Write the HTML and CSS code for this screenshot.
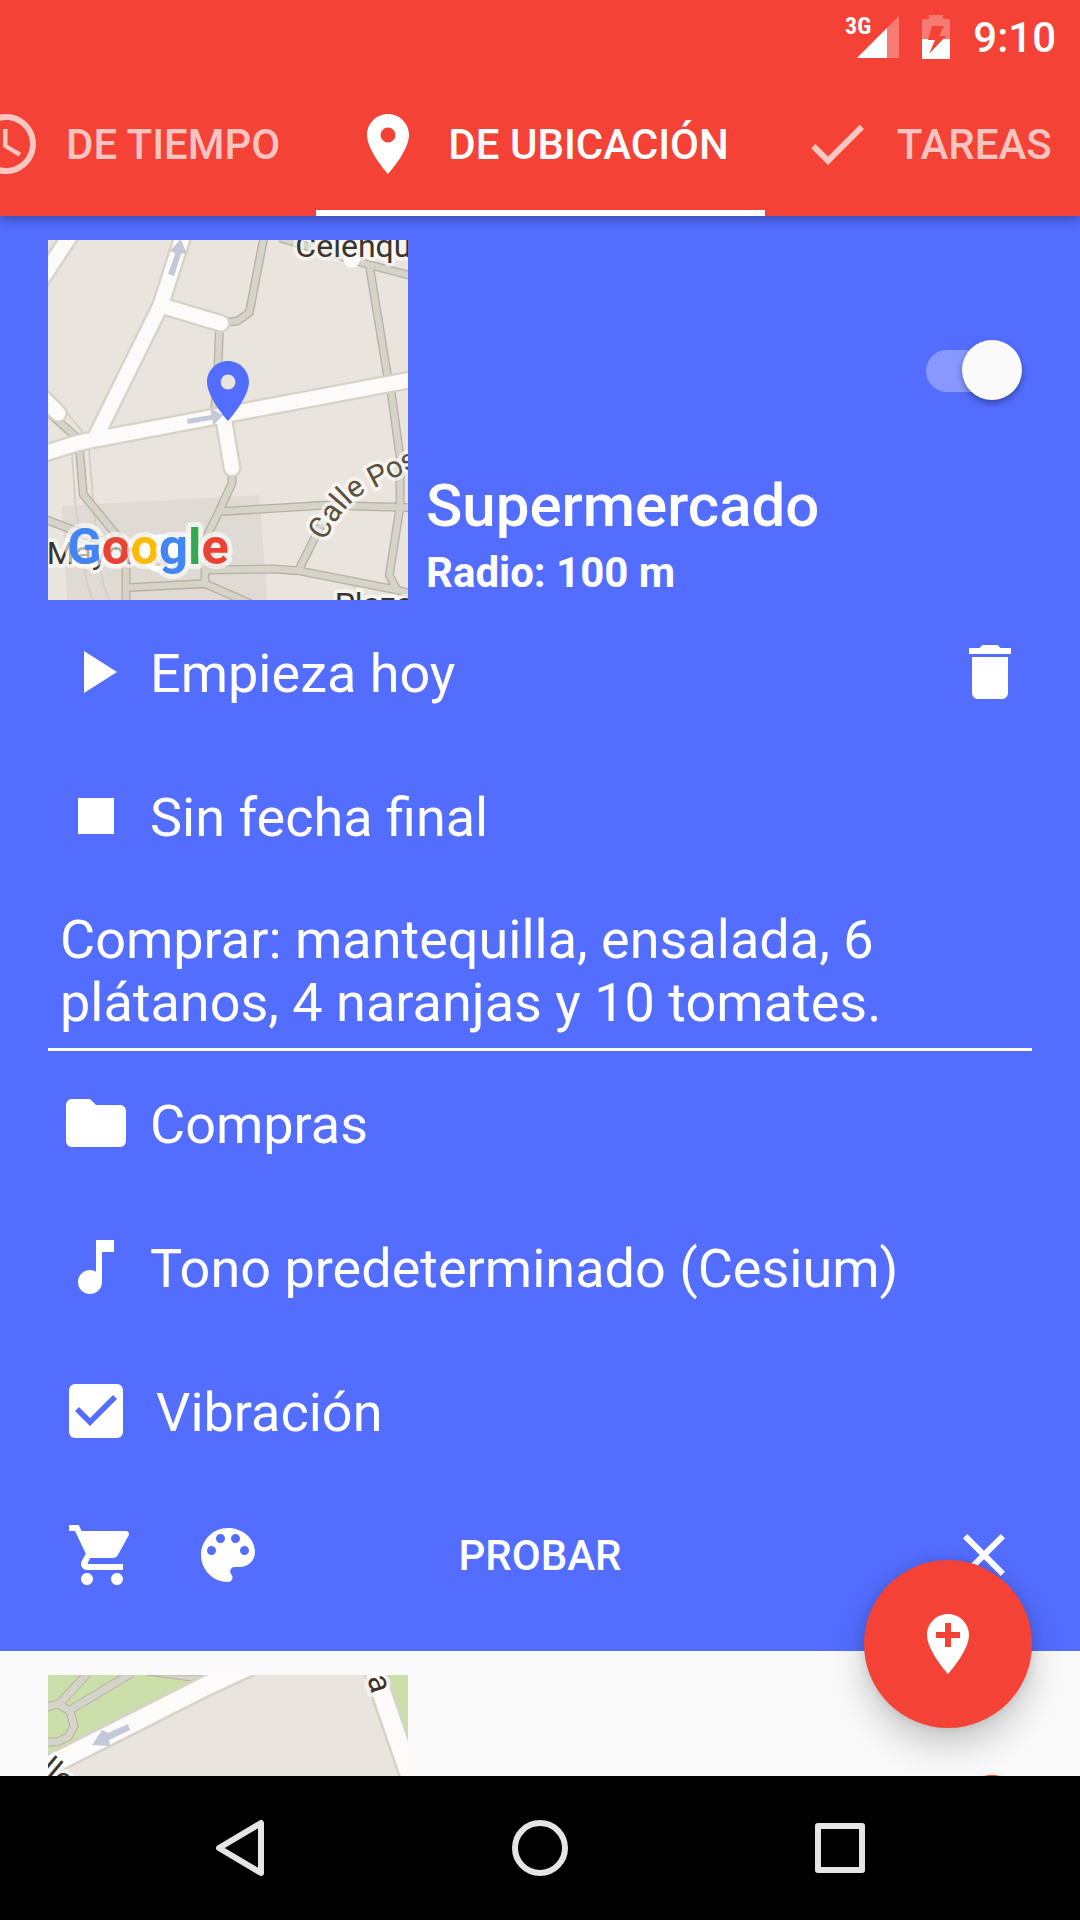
FILE: index.html
```html
<!DOCTYPE html>
<html lang="es">

<head>
    <meta charset="UTF-8">
    <meta name="viewport" content="width=device-width, initial-scale=1.0">
    <title>Recordatorios</title>
    <link rel="stylesheet" href="styles.css">
</head>

<body>
    <header class="app-bar">
        <div class="status-bar">
            <svg class="signal" viewBox="0 0 54 44">
                <text class="signal-text" x="0" y="19">3G</text>
                <path d="M54 1v42H12z" fill="#fff" fill-opacity=".3" />
                <path d="M42 13v30H12z" fill="#fff" />
            </svg>
            <svg class="battery" viewBox="0 0 28 44">
                <path d="M7 0h14v4h7v20H0V4h7z" fill="#fff" fill-opacity=".3" />
                <path d="M0 24h28v20H0z" fill="#fff" />
                <path d="M10 11h12l-5 10h7L7 39l6-14H6z" fill="#f44336" />
            </svg>
            <span class="clock">9:10</span>
        </div>
        <nav class="tabs">
            <a href="#tiempo" class="tab">
                <svg class="icon" viewBox="0 0 24 24"><path d="M11.99 2C6.47 2 2 6.48 2 12s4.47 10 9.99 10C17.52 22 22 17.52 22 12S17.52 2 11.99 2zM12 20c-4.42 0-8-3.58-8-8s3.58-8 8-8 8 3.58 8 8-3.58 8-8 8zm.5-13H11v6l5.25 3.15.75-1.23-4.5-2.67z" /></svg>
                De tiempo
            </a>
            <a href="#ubicacion" class="tab active">
                <svg class="icon" viewBox="0 0 24 24"><path d="M12 2C8.13 2 5 5.13 5 9c0 5.25 7 13 7 13s7-7.75 7-13c0-3.87-3.13-7-7-7zm0 9.500a2.500 2.500 0 0 1 0-5 2.500 2.500 0 0 1 0 5z" /></svg>
                De ubicación
            </a>
            <a href="#tareas" class="tab">
                <svg class="icon" viewBox="0 0 24 24"><path d="M9 16.170L4.830 12l-1.420 1.410L9 19 21 7l-1.410-1.410z" /></svg>
                Tareas
            </a>
        </nav>
    </header>

    <main class="content">
        <div class="list">
            <section class="card open" id="ubicacion">
                <div class="place">
                    <svg class="map" viewBox="24 30 1080 1080">
                        <rect x="24" y="30" width="1080" height="1080" fill="#e9e5de" />
                        <path d="M65 828L658 796l24 320H82z" fill="#dfdbd4" />
                        <!-- narrow lanes -->
                        <path class="lane-thin" d="M95 660l12 170 25 170q5 60 30 120M146 650l15 180 20 190q8 50 30 100M75 540l60 75M945 1065v50" />
                        <!-- footpaths -->
                        <g class="path-edge">
                            <path id="walks" d="M672 20L628 248l-36 25-34 4M538 300l-4 110-10 130M720 24L990 105l130 34M988 105l54 330 12 55 26 190v150l-32 206 27 52M576 735v24l-39 86-42 85v125M537 845l313-19 270 7M500 1020l200-3 75 5 305 60 40 12M775 1022l75-150M258 1120v-47l237-12 150 66M0 523l116 105 14 166 128 156v123M0 862l240 92" />
                        </g>
                        <use href="#walks" class="path-fill" />
                        <!-- streets -->
                        <g class="street-edge">
                            <path id="streets" d="M0 674l110-34 30-7 980-185M165 625L362 226 430 14M368 228l175 52M550 560l26 154M0 155L112-16M0 495l55 55" />
                        </g>
                        <use href="#streets" class="street-fill" />
                        <circle cx="935" cy="88" r="25" fill="#fcfbfa" />
                        <g class="arrow">
                            <path d="M384 132l22-62-16-7 32-36 19 46-17-3-22 68z" />
                            <path d="M441 567l73-12-3-21 38 22-29 30-3-17-74 13z" />
                        </g>
                        <circle cx="362" cy="970" r="57" fill="#fff" />
                        <path d="M338 934h50v76h-50zM345 958h36M362 934v26" fill="#cfc3bd" stroke="#fff" stroke-width="6" />
                        <g class="map-label">
                            <text x="766" y="80">Celenqu</text>
                            <text x="20" y="1003">Mayor</text>
                            <text x="884" y="1156">Plaza</text>
                            <path id="calle" d="M854 934Q898 852 934 818T1010 772L1170 690" fill="none" />
                            <text class="street-name"><textPath href="#calle">Calle Post</textPath></text>
                        </g>
                        <text class="google" x="82" y="1002"><tspan fill="#4285f4">G</tspan><tspan fill="#ea4335">o</tspan><tspan fill="#fbbc05">o</tspan><tspan fill="#4285f4">g</tspan><tspan fill="#34a853">l</tspan><tspan fill="#ea4335">e</tspan></text>
                        <path d="M12 2C8.13 2 5 5.13 5 9c0 5.25 7 13 7 13s7-7.75 7-13c0-3.87-3.13-7-7-7zm0 9.500a2.500 2.500 0 0 1 0-5 2.500 2.500 0 0 1 0 5z" fill="#536dfe" transform="translate(456 375) scale(9)" />
                    </svg>
                    <div class="place-info">
                        <input type="checkbox" class="switch" aria-label="Activar Supermercado" checked>
                        <div class="place-text">
                            <h2>Supermercado</h2>
                            <p>Radio: 100 m</p>
                        </div>
                    </div>
                </div>

                <div class="row">
                    <button class="row-btn">
                        <svg class="icon" viewBox="0 0 24 24"><path d="M8 5v14l11-7z" /></svg>
                        <span>Empieza hoy</span>
                    </button>
                    <button class="icon-btn" aria-label="Eliminar">
                        <svg class="icon" viewBox="0 0 24 24"><path d="M6 19c0 1.100.9 2 2 2h8c1.100 0 2-.9 2-2V7H6v12zM19 4h-3.500l-1-1h-5l-1 1H5v2h14V4z" /></svg>
                    </button>
                </div>
                <div class="row">
                    <button class="row-btn">
                        <svg class="icon" viewBox="0 0 24 24"><path d="M6 6h12v12H6z" /></svg>
                        <span>Sin fecha final</span>
                    </button>
                </div>

                <textarea class="note" rows="2" aria-label="Nota" spellcheck="false">Comprar: mantequilla, ensalada, 6 plátanos, 4 naranjas y 10 tomates.</textarea>

                <div class="row">
                    <button class="row-btn">
                        <svg class="icon" viewBox="0 0 24 24"><path d="M10 4H4c-1.100 0-1.990.9-1.990 2L2 18c0 1.100.9 2 2 2h16c1.100 0 2-.9 2-2V8c0-1.100-.9-2-2-2h-8l-2-2z" /></svg>
                        <span>Compras</span>
                    </button>
                </div>
                <div class="row">
                    <button class="row-btn">
                        <svg class="icon" viewBox="0 0 24 24"><path d="M12 3v10.550c-.59-.34-1.270-.55-2-.55-2.210 0-4 1.790-4 4s1.790 4 4 4 4-1.790 4-4V7h4V3h-6z" /></svg>
                        <span>Tono predeterminado (Cesium)</span>
                    </button>
                </div>
                <div class="row">
                    <label class="check-label">
                        <input type="checkbox" class="check" checked>
                        <span>Vibración</span>
                    </label>
                </div>

                <div class="actions">
                    <div class="actions-left">
                        <button class="icon-btn" aria-label="Icono">
                            <svg class="icon" viewBox="0 0 24 24"><path d="M7 18c-1.100 0-1.990.9-1.990 2S5.900 22 7 22s2-.9 2-2-.9-2-2-2zM1 2v2h2l3.600 7.590-1.350 2.450c-.16.28-.25.61-.25.96 0 1.100.9 2 2 2h12v-2H7.420c-.14 0-.25-.11-.25-.25l.03-.12.900-1.630h7.450c.75 0 1.410-.41 1.750-1.030l3.580-6.490c.08-.14.12-.31.12-.48 0-.55-.45-1-1-1H5.210l-.94-2H1zm16 16c-1.100 0-1.990.9-1.990 2s.89 2 1.990 2 2-.9 2-2-.9-2-2-2z" /></svg>
                        </button>
                        <button class="icon-btn" aria-label="Color">
                            <svg class="icon" viewBox="0 0 24 24"><path d="M12 3c-4.970 0-9 4.030-9 9s4.030 9 9 9c.83 0 1.500-.67 1.500-1.500 0-.39-.15-.74-.39-1.010-.23-.26-.38-.61-.38-.99 0-.83.67-1.500 1.500-1.500H16c2.760 0 5-2.240 5-5 0-4.420-4.030-8-9-8zm-5.500 9c-.83 0-1.500-.67-1.500-1.500S5.670 9 6.500 9 8 9.670 8 10.500 7.330 12 6.500 12zm3-4C8.670 8 8 7.330 8 6.500S8.670 5 9.500 5s1.500.67 1.500 1.500S10.330 8 9.500 8zm5 0c-.83 0-1.500-.67-1.500-1.500S13.670 5 14.500 5s1.500.67 1.500 1.500S15.330 8 14.500 8zm3 4c-.83 0-1.500-.67-1.500-1.500S16.670 9 17.500 9s1.500.67 1.500 1.500-.67 1.500-1.500 1.500z" /></svg>
                        </button>
                    </div>
                    <button class="text-btn">Probar</button>
                    <button class="icon-btn close-btn" aria-label="Cerrar">
                        <svg class="icon" viewBox="0 0 24 24"><path d="M19 6.410L17.590 5 12 10.590 6.410 5 5 6.410 10.590 12 5 17.590 6.410 19 12 13.410 17.590 19 19 17.590 13.410 12z" /></svg>
                    </button>
                </div>
            </section>

            <section class="card">
                <div class="place">
                    <svg class="map" viewBox="0 0 360 360">
                        <rect width="360" height="360" fill="#e9e5de" />
                        <path d="M0 0h184L0 92zM340 0h20v75z" fill="#cbdfaa" />
                        <path d="M99 0h60l-16 6z" fill="#d4d4c8" stroke="#b9b0a5" />
                        <path class="park-edge" d="M-5 33L10 29l12 7 4 15-6 11-11 5H-5M12 28L40-2M22 35L84-2" />
                        <path class="park-fill" d="M-5 33L10 29l12 7 4 15-6 11-11 5H-5M12 28L40-2M22 35L84-2" />
                        <path d="M212-14l-52 24L14 84l-40 21M326-6l8 25 100 290" fill="none" stroke="#d8d2c6" stroke-width="23" />
                        <path d="M212-14l-52 24L14 84l-40 21M326-6l8 25 100 290" fill="none" stroke="#fcfbfa" stroke-width="18" />
                        <path class="arrow" d="M80 49l-20 9-6-3-10 15 18 1-1-6 21-10z" />
                        <g class="map-label small">
                            <text transform="translate(319 3) rotate(73)">a</text>
                            <text transform="translate(-10 97) rotate(40)">lle</text>
                        </g>
                    </svg>
                    <div class="place-info">
                        <input type="checkbox" class="switch" aria-label="Activar recordatorio" checked>
                    </div>
                </div>
            </section>
        </div>

        <button class="fab" aria-label="Añadir ubicación">
            <svg class="icon" viewBox="0 0 24 24"><path d="M12 2C8.140 2 5 5.140 5 9c0 5.250 7 13 7 13s7-7.750 7-13c0-3.860-3.140-7-7-7zm4 8h-3v3h-2v-3H8V8h3V5h2v3h3v2z" /></svg>
        </button>
    </main>

    <footer class="nav-bar">
        <button aria-label="Atrás">
            <svg class="icon" viewBox="0 0 72 72"><path d="M57 11v50L15 36z" /></svg>
        </button>
        <button aria-label="Inicio">
            <svg class="icon" viewBox="0 0 72 72"><circle cx="36" cy="36" r="25" /></svg>
        </button>
        <button aria-label="Recientes">
            <svg class="icon" viewBox="0 0 72 72"><path d="M14 14h44v44H14z" /></svg>
        </button>
    </footer>
</body>

</html>
```
FILE: styles.css
```css
* {
    box-sizing: border-box;
    margin: 0;
    padding: 0;
    font-family: Roboto, sans-serif;
}

body {
    height: 100vh;
    display: flex;
    flex-direction: column;
    overflow: hidden;
    background-color: #fafafa;
}

button {
    border: none;
    background: none;
    color: inherit;
    cursor: pointer;
}

.icon {
    display: block;
    flex: none;
    width: 72px;
    height: 72px;
    fill: currentColor;
}

/* top bar */
.app-bar {
    position: relative;
    z-index: 1;
    background-color: #f44336;
    color: white;
    box-shadow: 0 2px 12px rgba(0, 0, 0, 0.4);
}

.status-bar {
    display: flex;
    align-items: center;
    justify-content: flex-end;
    gap: 23px;
    height: 72px;
    padding: 2px 24px 0 0;
}

.signal {
    width: 54px;
    height: 44px;
    overflow: visible;
}

.signal-text {
    font-family: "Roboto Condensed", Roboto, sans-serif;
    font-size: 24px;
    font-weight: 700;
    fill: white;
}

.battery {
    width: 28px;
    height: 44px;
}

.clock {
    font-size: 42px;
    font-weight: 500;
}

/* the strip is scrolled so that the active tab is in the middle */
.tabs {
    display: flex;
    height: 144px;
    margin-left: -66px;
}

.tab {
    display: flex;
    flex: none;
    align-items: center;
    gap: 24px;
    padding: 6px 36px 0;
    border-bottom: 6px solid transparent;
    color: rgba(255, 255, 255, 0.7);
    font-size: 42px;
    font-weight: 500;
    text-transform: uppercase;
    text-decoration: none;
    white-space: nowrap;
}

.tab.active {
    color: white;
    border-color: white;
}

/* list */
.content {
    position: relative;
    flex: 1;
    min-height: 0;
}

.list {
    height: 100%;
    overflow: hidden;
}

.card {
    padding: 24px 48px;
    color: #f44336;
}

.card.open {
    background-color: #536dfe;
    color: white;
}

.place {
    display: flex;
    gap: 18px;
}

.map {
    flex: none;
    width: 360px;
    height: 360px;
}

.place-info {
    flex: 1;
    display: flex;
    flex-direction: column;
    justify-content: space-between;
}

.place-text h2 {
    font-size: 60px;
    font-weight: 500;
    line-height: 72px;
    margin-bottom: 4px;
}

.place-text p {
    font-size: 42px;
    font-weight: 700;
    line-height: 54px;
}

.switch {
    appearance: none;
    position: relative;
    align-self: flex-end;
    width: 96px;
    height: 60px;
    margin: 100px 10px 0 0;
}

.switch::before {
    content: "";
    position: absolute;
    left: 0;
    top: 10px;
    width: 90px;
    height: 42px;
    border-radius: 21px;
    background-color: currentColor;
    opacity: 0.3;
}

.switch::after {
    content: "";
    position: absolute;
    right: 0;
    top: 0;
    width: 60px;
    height: 60px;
    border-radius: 50%;
    background-color: #f44336;
    box-shadow: 0 3px 6px rgba(0, 0, 0, 0.35);
}

.open .switch {
    color: white;
}

.open .switch::after {
    background-color: #fafafa;
}

.row {
    display: flex;
    align-items: center;
    justify-content: space-between;
    height: 144px;
    padding: 0 6px 0 12px;
}

.row-btn {
    display: flex;
    align-items: center;
    gap: 18px;
    font-size: 54px;
    text-align: left;
}

.row span {
    padding-top: 3px;
}

.check-label {
    display: flex;
    align-items: center;
    gap: 24px;
    padding-left: 9px;
    font-size: 54px;
}

.check {
    appearance: none;
    width: 54px;
    height: 54px;
    margin-right: 9px;
    border-radius: 6px;
    background-color: white;
}

.check:checked::after {
    content: "";
    display: block;
    height: 54px;
    background-color: #536dfe;
    clip-path: polygon(21px 42px, 6px 27px, 10px 23px, 21px 34px, 44px 11px, 48px 15px);
}

.note {
    display: block;
    width: 100%;
    padding: 20px 12px 14px;
    border: none;
    border-bottom: 3px solid white;
    outline: none;
    resize: none;
    overflow: hidden;
    background: none;
    color: white;
    font-size: 54px;
    line-height: 63px;
}

.actions {
    display: grid;
    grid-template-columns: 1fr auto 1fr;
    align-items: center;
    height: 144px;
    padding: 0 12px;
}

.actions-left {
    display: flex;
    gap: 54px;
    padding-left: 6px;
}

.text-btn {
    font-size: 42px;
    font-weight: 500;
    text-transform: uppercase;
}

.close-btn {
    justify-self: end;
}

.fab {
    position: absolute;
    right: 48px;
    bottom: 48px;
    display: flex;
    align-items: center;
    justify-content: center;
    width: 168px;
    height: 168px;
    border-radius: 50%;
    background-color: #f44336;
    color: white;
    box-shadow: 0 18px 36px rgba(0, 0, 0, 0.2), 0 0 12px rgba(0, 0, 0, 0.12);
}

/* maps */
.lane-thin {
    fill: none;
    stroke: #d3cdc2;
    stroke-width: 5;
}

.path-edge {
    fill: none;
    stroke: #b9b0a5;
    stroke-width: 27;
}

.path-fill {
    fill: none;
    stroke: #d4d4c8;
    stroke-width: 19;
}

.street-edge {
    fill: none;
    stroke: #d8d2c6;
    stroke-width: 57;
    stroke-linecap: round;
}

.street-fill {
    fill: none;
    stroke: #fcfbfa;
    stroke-width: 43;
    stroke-linecap: round;
}

.arrow {
    fill: #c4c8d8;
}

.map-label text {
    font-size: 96px;
    fill: #3c342c;
    stroke: rgba(255, 255, 255, 0.6);
    stroke-width: 22;
    stroke-linejoin: round;
    paint-order: stroke;
}

.map-label .street-name {
    font-size: 90px;
    fill: #5a503c;
}

.map-label.small text {
    font-size: 32px;
    stroke-width: 8;
}

.google {
    font-family: Lato, sans-serif;
    font-size: 152px;
    font-weight: 700;
    stroke: rgba(255, 255, 255, 0.6);
    stroke-width: 30;
    stroke-linejoin: round;
    paint-order: stroke;
}

.park-edge {
    fill: none;
    stroke: #b9b0a5;
    stroke-width: 9;
}

.park-fill {
    fill: none;
    stroke: #d4d4c8;
    stroke-width: 7;
}

/* system buttons */
.nav-bar {
    display: flex;
    justify-content: center;
    height: 144px;
    background-color: black;
}

.nav-bar button {
    display: flex;
    flex: 0 1 300px;
    align-items: center;
    justify-content: center;
}

.nav-bar .icon {
    fill: none;
    stroke: #e5e5e5;
    stroke-width: 6;
    stroke-linejoin: round;
}
```
